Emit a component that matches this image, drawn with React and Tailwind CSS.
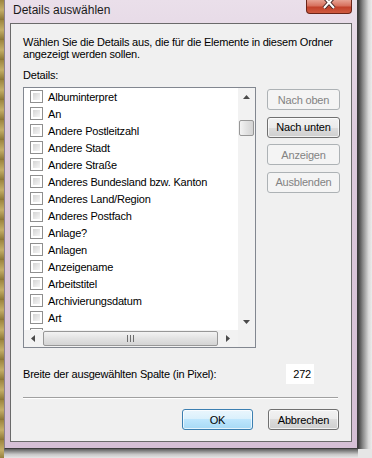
const items = [
  "Albuminterpret",
  "An",
  "Andere Postleitzahl",
  "Andere Stadt",
  "Andere Straße",
  "Anderes Bundesland bzw. Kanton",
  "Anderes Land/Region",
  "Anderes Postfach",
  "Anlage?",
  "Anlagen",
  "Anzeigename",
  "Arbeitstitel",
  "Archivierungsdatum",
  "Art",
  "",
];

const font = { fontFamily: "'Liberation Sans', Arial, sans-serif" };

function CheckBox() {
  return (
    <div className="w-[13px] h-[13px] shrink-0 border border-[#8f8f8f] bg-white p-[2px]">
      <div className="w-full h-full bg-[linear-gradient(135deg,#d4d4d4,#f6f6f6)]" />
    </div>
  );
}

function WinButton({ children, disabled, primary }) {
  if (disabled) {
    return (
      <div className="h-[21px] w-full rounded-[3px] border border-[#adb2b5] bg-[#f4f4f4] text-[#838383] flex items-center justify-center">
        {children}
      </div>
    );
  }
  const bg = primary
    ? "border-[#3c7fb1] bg-[linear-gradient(180deg,#eaf6fd_0%,#d9f0fc_50%,#bee6fd_50%,#a7d9f5_100%)]"
    : "border-[#707070] bg-[linear-gradient(180deg,#f2f2f2_0%,#ebebeb_50%,#dddddd_50%,#cfcfcf_100%)]";
  return (
    <div className={`h-[21px] w-full rounded-[3px] border ${bg} shadow-[inset_0_0_0_1px_rgba(255,255,255,0.7)] text-black flex items-center justify-center`}>
      {children}
    </div>
  );
}

function Arrow({ dir }) {
  const pts = {
    up: "0,4 3.5,0 7,4",
    down: "0,0 3.5,4 7,0",
    left: "4,0 0,3.5 4,7",
    right: "0,0 4,3.5 0,7",
  }[dir];
  const vert = dir === "up" || dir === "down";
  return (
    <svg width={vert ? 7 : 4} height={vert ? 4 : 7}>
      <polygon points={pts} fill="#4a4a4a" />
    </svg>
  );
}

function ListBox() {
  return (
    <div className="w-[233px] h-[261px] border border-[#828790] bg-white flex flex-col">
      <div className="flex h-[242px]">
        <div className="flex-1 overflow-hidden">
          {items.map((it, i) => (
            <div key={i} className="h-[17px] flex items-center pl-[6px] gap-[5px] whitespace-nowrap">
              <CheckBox />
              {it && <span className="text-black">{it}</span>}
            </div>
          ))}
        </div>
        {/* vertical scrollbar */}
        <div className="w-[17px] bg-[#f2f2f2] flex flex-col items-center">
          <div className="h-[17px] flex items-center justify-center">
            <Arrow dir="up" />
          </div>
          <div className="mt-[15px] w-[15px] h-[16px] rounded-[2px] border border-[#979797] bg-[linear-gradient(90deg,#f3f3f3,#e2e2e2_50%,#d4d4d4)]" />
          <div className="flex-1" />
          <div className="h-[17px] flex items-center justify-center">
            <Arrow dir="down" />
          </div>
        </div>
      </div>
      {/* horizontal scrollbar */}
      <div className="flex h-[17px]">
        <div className="flex-1 bg-[#f2f2f2] flex items-center">
          <div className="w-[17px] flex items-center justify-center">
            <Arrow dir="left" />
          </div>
          <div className="ml-[2px] w-[175px] h-[15px] rounded-[2px] border border-[#979797] bg-[linear-gradient(180deg,#f3f3f3,#e2e2e2_50%,#d4d4d4)] flex items-center justify-center gap-[2px]">
            <div className="w-px h-[7px] bg-[#6e6e6e]" />
            <div className="w-px h-[7px] bg-[#6e6e6e]" />
            <div className="w-px h-[7px] bg-[#6e6e6e]" />
          </div>
          <div className="flex-1 flex items-center justify-center">
            <Arrow dir="right" />
          </div>
        </div>
        <div className="w-[17px] bg-[#f0f0f0]" />
      </div>
    </div>
  );
}

export default function App() {
  return (
    <div className="w-[372px] h-[458px] flex overflow-hidden bg-[#e6e6e6] text-[11px] leading-[12px] tracking-[-0.2px]" style={font}>
      <div className="w-[4px] h-full bg-[repeating-linear-gradient(180deg,#9c8540_0px,#c4ae68_10px,#8a7434_20px)]" />
      <div className="w-[354px] flex flex-col">
        <div className="h-[449px] border-x border-b border-x-[#8c808c] border-r-[#3c3c3c] border-b-[#3c3c3c] bg-[linear-gradient(180deg,#eadfea_0%,#dccadc_30%,#d5bfd5_100%)] px-[5px] flex flex-col">
          {/* title bar */}
          <div className="h-[23px] flex items-start">
            <div className="pl-[3px] pt-[3px] text-[12px] leading-[14px] text-[#1a1a1a] tracking-normal">Details auswählen</div>
            <div className="ml-auto w-[46px] h-[14px] rounded-b-[4px] border border-t-0 border-[#6b2418] bg-[linear-gradient(180deg,#e7a293_0%,#d7705d_45%,#c2412b_55%,#cf5a3f_100%)] flex justify-center overflow-hidden">
              <svg width="14" height="12" viewBox="0 0 14 12" className="-mt-[3px]">
                <path d="M2 0 L12 11 M12 0 L2 11" stroke="#4a2a2a" strokeWidth="4" />
                <path d="M2 0 L12 11 M12 0 L2 11" stroke="#ffffff" strokeWidth="2" />
              </svg>
            </div>
          </div>
          {/* client area */}
          <div className="h-[419px] border border-[#6a6a6a] bg-[#f0f0f0] pl-[12px] pt-[12px] flex flex-col text-black">
            <p className="whitespace-nowrap">Wählen Sie die Details aus, die für die Elemente in diesem Ordner</p>
            <p>angezeigt werden sollen.</p>
            <p className="mt-[9px]">Details:</p>
            <div className="mt-[6px] flex gap-[11px]">
              <ListBox />
              <div className="w-[73px] pt-[2px] flex flex-col gap-[6.6px]">
                <WinButton disabled>Nach oben</WinButton>
                <WinButton>Nach unten</WinButton>
                <WinButton disabled>Anzeigen</WinButton>
                <WinButton disabled>Ausblenden</WinButton>
              </div>
            </div>
            <div className="mt-[16px] flex items-center w-[291px]">
              <span>Breite der ausgewählten Spalte (in Pixel):</span>
              <div className="ml-auto w-[28px] h-[20px] bg-white flex items-center justify-end pr-[3px]">272</div>
            </div>
            <div className="mt-[13px] w-[315px] h-px bg-[#a0a0a0] shadow-[0_1px_0_#ffffff]" />
            <div className="mt-[11px] w-[316px] flex justify-end gap-[15px]">
              <div className="w-[71px]">
                <WinButton primary>OK</WinButton>
              </div>
              <div className="w-[71px]">
                <WinButton>Abbrechen</WinButton>
              </div>
            </div>
          </div>
        </div>
        <div className="h-[9px] bg-[linear-gradient(180deg,#5c5c5c,#c8c8c8_60%,#e6e6e6)]" />
      </div>
      <div className="w-[14px] h-[449px] bg-[linear-gradient(90deg,#3a3a3a,#8a8a8a_35%,#d8d8d8_75%,#ececec)]" />
    </div>
  );
}
